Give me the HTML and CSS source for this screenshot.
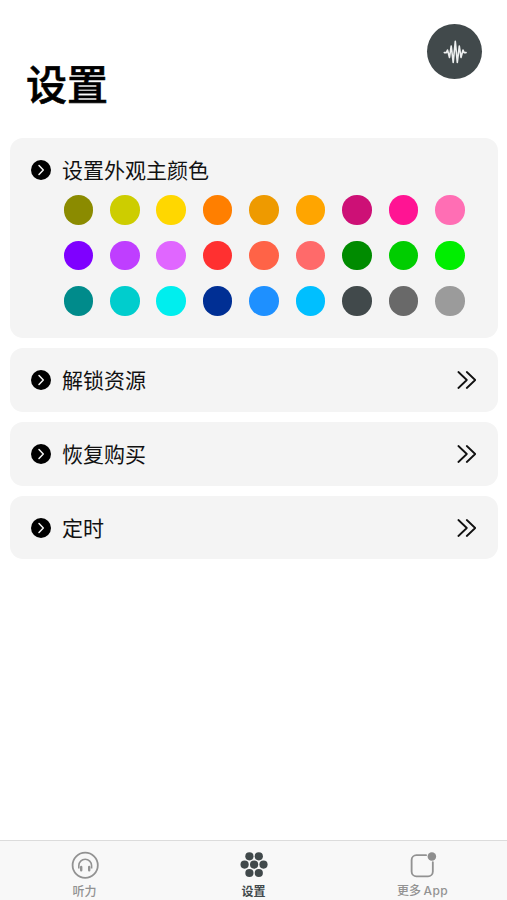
FILE: index.html
```html
<!DOCTYPE html>
<html lang="zh-CN">
<head>
  <meta charset="UTF-8">
  <meta name="viewport" content="width=device-width, initial-scale=1.0">
  <title>设置</title>
  <link rel="stylesheet" href="styles.css">
</head>
<body>
  <svg class="symbols" width="0" height="0">
    <symbol id="bullet" viewBox="0 0 20 20">
      <circle cx="10" cy="10" r="10" fill="#000"/>
      <path d="M8 5.6l4.3 4.4L8 14.4" fill="none" stroke="#f4f4f4" stroke-width="1.5" stroke-linecap="round" stroke-linejoin="round"/>
    </symbol>
    <symbol id="more" viewBox="0 0 19 18">
      <path d="M1.4 1l8.4 8-8.4 8M9.8 1l8.4 8-8.4 8" fill="none" stroke="#111" stroke-width="1.8" stroke-linecap="round" stroke-linejoin="round"/>
    </symbol>
  </svg>

  <header class="header">
    <h1>设置</h1>
    <button class="wave">
      <svg width="24" height="24" viewBox="0 0 24 24" fill="none" stroke="#eef0f0" stroke-width="1.6" stroke-linejoin="round" stroke-linecap="round">
        <path d="M1.3 12.6h2.1l1.1-2.6 2 7.5L8.2 6l2 16.5L12.3 1.4l2 21.1 2-16.5L18 17.5l2-7.5 1.1 2.6h2"/>
      </svg>
    </button>
  </header>

  <main class="list">
    <section class="card card-theme">
      <div class="row">
        <svg class="bullet"><use href="#bullet"/></svg>
        <span class="label">设置外观主颜色</span>
      </div>
      <div class="swatches" id="swatches"></div>
    </section>
    <section class="card row">
      <svg class="bullet"><use href="#bullet"/></svg>
      <span class="label">解锁资源</span>
      <svg class="more"><use href="#more"/></svg>
    </section>
    <section class="card row">
      <svg class="bullet"><use href="#bullet"/></svg>
      <span class="label">恢复购买</span>
      <svg class="more"><use href="#more"/></svg>
    </section>
    <section class="card row">
      <svg class="bullet"><use href="#bullet"/></svg>
      <span class="label">定时</span>
      <svg class="more"><use href="#more"/></svg>
    </section>
  </main>

  <nav class="tabs">
    <a class="tab">
      <svg width="28" height="28" viewBox="0 0 28 28" fill="none" stroke="#929292">
        <circle cx="14.2" cy="14.3" r="12.6" stroke-width="1.8"/>
        <path d="M7.8 17.5v-2.8a6.4 6.4 0 0 1 12.8 0v2.8" stroke-width="1.6"/>
        <path d="M10.2 16v3.3M18.2 16v3.3" stroke-width="2.4" stroke-linecap="round"/>
      </svg>
      <span>听力</span>
    </a>
    <a class="tab active">
      <svg width="28" height="28" viewBox="0 0 28 28" fill="#41494b">
        <circle cx="9.4" cy="5.3" r="4.1"/>
        <circle cx="18.8" cy="5.3" r="4.1"/>
        <circle cx="4.6" cy="13.6" r="4.1"/>
        <circle cx="14.1" cy="13.6" r="4.1"/>
        <circle cx="23.5" cy="13.6" r="4.1"/>
        <circle cx="9.4" cy="22" r="4.1"/>
        <circle cx="18.8" cy="22" r="4.1"/>
      </svg>
      <span>设置</span>
    </a>
    <a class="tab">
      <svg width="28" height="28" viewBox="0 0 28 28">
        <path d="M17.2 4.3H7.2a5 5 0 0 0-5 5v12a5 5 0 0 0 5 5h12a5 5 0 0 0 5-5v-9.8" fill="none" stroke="#929292" stroke-width="1.9" stroke-linecap="round"/>
        <circle cx="23.2" cy="5.8" r="4.4" fill="#8e8e8e"/>
      </svg>
      <span>更多 <span class="latin">App</span></span>
    </a>
  </nav>

  <script>
    const colors = [
      "#8b8b00", "#cdcd00", "#ffd700", "#ff7f00", "#ee9a00", "#ffa500", "#cd1076", "#ff1493", "#ff6eb4",
      "#7f00ff", "#bf3eff", "#e066ff", "#ff3030", "#ff6347", "#ff6a6a", "#008b00", "#00cd00", "#00ee00",
      "#008b8b", "#00cdcd", "#00eeee", "#002f94", "#1e90ff", "#00bfff", "#41494b", "#696969", "#9b9b9b"
    ];
    document.getElementById("swatches").innerHTML = colors
      .map(c => `<span class="swatch" style="background:${c}"></span>`)
      .join("");
  </script>
</body>
</html>
```
FILE: styles.css
```css
* {
  box-sizing: border-box;
}
body {
  margin: 0;
  height: 900px;
  display: flex;
  flex-direction: column;
  background: #fff;
  color: #111;
  font-family: "Noto Sans CJK SC", sans-serif;
}
.symbols {
  position: absolute;
}
.header {
  height: 138px;
  padding: 24px 25px 0 26px;
  display: flex;
  justify-content: space-between;
  align-items: flex-start;
}
h1 {
  margin: 28px 0 0;
  font-size: 41px;
  line-height: 60px;
  font-weight: 500;
  -webkit-text-stroke: 0.6px #000;
  color: #000;
}
.wave {
  width: 55px;
  height: 55px;
  padding: 0;
  border: none;
  border-radius: 50%;
  background: #41494b;
  display: flex;
  align-items: center;
  justify-content: center;
}
.list {
  flex: 1;
  padding: 0 9px 0 10px;
  display: flex;
  flex-direction: column;
  gap: 10px;
}
.card {
  height: 63.7px;
  padding: 0 22px 0 21px;
  border-radius: 13px;
  background: #f4f4f4;
}
.card-theme {
  height: 200.4px;
}
.row {
  display: flex;
  align-items: center;
}
.card-theme .row {
  height: 64px;
}
.bullet {
  width: 20px;
  height: 20px;
}
.label {
  flex: 1;
  margin-left: 11px;
  padding-bottom: 2px;
  font-size: 21px;
  line-height: 30px;
}
.more {
  width: 19px;
  height: 18px;
}
.swatches {
  margin: -7px 0 0 32.5px;
  display: grid;
  grid-template-columns: repeat(9, 29.6px);
  gap: 16.1px 16.85px;
}
.swatch {
  height: 29.6px;
  border-radius: 50%;
}
.tabs {
  height: 60px;
  border-top: 1px solid #dcdcdc;
  background: #f8f8f8;
  display: flex;
}
.tab {
  flex: 1;
  padding-top: 10px;
  display: flex;
  flex-direction: column;
  align-items: center;
  font-size: 12px;
  line-height: 18px;
  font-weight: 500;
  color: #929292;
}
.tab > span {
  margin-top: 3px;
}
.latin {
  font-family: Inter, sans-serif;
  letter-spacing: 0.4px;
}
.active {
  font-weight: 700;
  color: #41494b;
}
```
